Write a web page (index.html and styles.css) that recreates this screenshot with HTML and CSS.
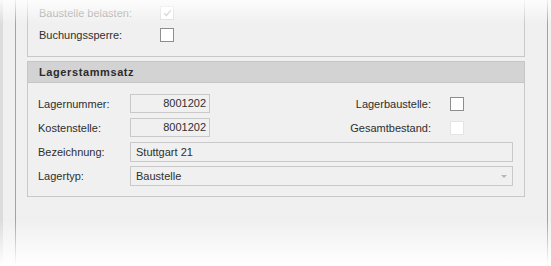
FILE: index.html
```html
<!DOCTYPE html>
<html lang="de">
<head>
  <meta charset="UTF-8">
  <title>Lagerstammsatz</title>
  <link rel="stylesheet" href="styles.css">
</head>
<body>
  <div class="outer">
    <div class="panel">

      <!-- previous group, cut at the top -->
      <div class="group-top">
        <div class="row-small">
          <span class="label disabled">Baustelle belasten:</span>
          <span class="check check-disabled">
            <svg width="9" height="8" viewBox="0 0 9 8"><path d="M1 4.2 L3.4 6.5 L8 1" fill="none" stroke="#c4c4c4" stroke-width="1.2"/></svg>
          </span>
        </div>
        <div class="row-small">
          <span class="label">Buchungssperre:</span>
          <span class="check"></span>
        </div>
      </div>

      <!-- Lagerstammsatz -->
      <div class="group">
        <div class="group-header">Lagerstammsatz</div>
        <div class="group-body">
          <div class="row">
            <span class="label lbl-left">Lagernummer:</span>
            <span class="field field-short">8001202</span>
            <span class="spacer"></span>
            <span class="label">Lagerbaustelle:</span>
            <span class="check check-right"></span>
          </div>
          <div class="row">
            <span class="label lbl-left">Kostenstelle:</span>
            <span class="field field-short">8001202</span>
            <span class="spacer"></span>
            <span class="label">Gesamtbestand:</span>
            <span class="check check-right check-off"></span>
          </div>
          <div class="row">
            <span class="label lbl-left">Bezeichnung:</span>
            <span class="field field-wide">Stuttgart 21</span>
          </div>
          <div class="row">
            <span class="label lbl-left">Lagertyp:</span>
            <span class="field field-wide field-combo">
              Baustelle
              <span class="arrow"></span>
            </span>
          </div>
        </div>
      </div>

    </div>
    <div class="right-band"></div>
  </div>

  <div class="fade-top"></div>
  <div class="fade-bottom"></div>
</body>
</html>
```

FILE: styles.css
```css
body {
  margin: 0;
  padding: 0;
  background-color: #f0f0f0;
  font-family: "Liberation Sans", Arial, sans-serif;
  font-size: 11px;
  color: #2e2e2e;
  overflow: hidden;
}

.outer {
  display: flex;
  height: 266px;
  border-left: 3px solid #dcdcdc;
}

.panel {
  margin-left: 12px;
  width: 520px;
  border-left: 1px solid #a2a2a2;
  border-right: 1px solid #a2a2a2;
  padding-left: 11px;
  height: 100%;
}

.right-band {
  flex: 1;
  background-color: #f2f2f2;
}

/* upper group (only the lower part is visible) */
.group-top {
  width: 496px;
  border: 1px solid #c8c8c8;
  border-top: none;
  padding-top: 2px;
  padding-bottom: 10px;
}

.row-small {
  display: flex;
  align-items: center;
  height: 22px;
  padding-left: 11px;
}

.row-small .label {
  width: 121px;
}

.label {
  white-space: nowrap;
}

.disabled {
  color: #9c9c9c;
}

.check {
  display: flex;
  align-items: center;
  justify-content: center;
  box-sizing: border-box;
  width: 14px;
  height: 14px;
  border: 1px solid #8e8e8e;
  background-color: #fff;
}

.check-disabled {
  border-color: #dcdcdc;
}

.check-off {
  border-color: #e4e4e4;
}

/* Lagerstammsatz group */
.group {
  margin-top: 4px;
  width: 498px;
}

.group-header {
  height: 20px;
  line-height: 20px;
  border: 1px solid #c6c6c6;
  background-color: #d3d3d3;
  padding-left: 11px;
  font-weight: bold;
  letter-spacing: 0.6px;
  color: #2b2b2b;
}

.group-body {
  border: 1px solid #c8c8c8;
  border-top: none;
  padding: 11px 10px 11px 10px;
  display: flex;
  flex-direction: column;
  gap: 5px;
}

.row {
  display: flex;
  align-items: center;
  height: 19px;
}

.lbl-left {
  width: 92px;
}

.field {
  box-sizing: border-box;
  height: 19px;
  line-height: 17px;
  border: 1px solid #c9c9c9;
  padding: 0 5px;
  color: #2f2f2f;
}

.field-short {
  width: 80px;
  text-align: right;
  padding-right: 3px;
}

.field-wide {
  width: 383px;
  height: 20px;
  line-height: 18px;
}

.field-combo {
  position: relative;
}

.arrow {
  position: absolute;
  right: 5px;
  top: 8px;
  width: 0;
  height: 0;
  border-left: 3px solid transparent;
  border-right: 3px solid transparent;
  border-top: 3px solid #b5b5b5;
}

.spacer {
  flex: 1;
}

.check-right {
  margin-left: 19px;
  margin-right: 50px;
}

/* white fades over the top and bottom edge */
.fade-top {
  position: absolute;
  left: 0;
  top: 0;
  width: 100%;
  height: 24px;
  background: linear-gradient(to bottom, rgba(255,255,255,0.85), rgba(255,255,255,0));
  pointer-events: none;
}

.fade-bottom {
  position: absolute;
  left: 0;
  bottom: 0;
  width: 100%;
  height: 46px;
  background: linear-gradient(to bottom, rgba(255,255,255,0), rgba(255,255,255,1));
  pointer-events: none;
}
```
